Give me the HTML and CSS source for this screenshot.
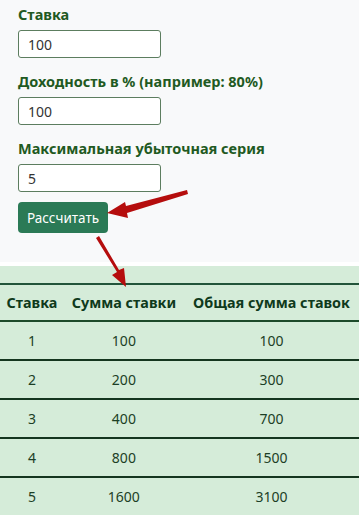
FILE: index.html
```html
<!DOCTYPE html>
<html lang="ru">
<head>
  <meta charset="UTF-8">
  <meta name="viewport" content="width=device-width, initial-scale=1.0">
  <title>Калькулятор ставок</title>
  <link rel="stylesheet" href="styles.css">
</head>
<body>
  <!-- Form -->
  <div class="calc-form">
    <label class="field-label" for="stake">Ставка</label>
    <input class="field-input" id="stake" type="text" value="100">

    <label class="field-label" for="profit">Доходность в % (например: 80%)</label>
    <input class="field-input" id="profit" type="text" value="100">

    <label class="field-label" for="series">Максимальная убыточная серия</label>
    <input class="field-input" id="series" type="text" value="5">

    <button class="calc-button">Рассчитать</button>
  </div>

  <!-- Results -->
  <div class="results">
    <table class="results-table">
      <thead>
        <tr>
          <th>Ставка</th>
          <th>Сумма ставки</th>
          <th>Общая сумма ставок</th>
        </tr>
      </thead>
      <tbody>
        <tr><td>1</td><td>100</td><td>100</td></tr>
        <tr><td>2</td><td>200</td><td>300</td></tr>
        <tr><td>3</td><td>400</td><td>700</td></tr>
        <tr><td>4</td><td>800</td><td>1500</td></tr>
        <tr><td>5</td><td>1600</td><td>3100</td></tr>
      </tbody>
    </table>
  </div>

  <!-- Annotation arrows -->
  <svg class="arrows" width="359" height="515" viewBox="0 0 359 515" xmlns="http://www.w3.org/2000/svg">
    <path d="M187 190 L126 206 L125 202 L107 213 L128 218 L127 213 L188 194 Z" fill="#b50d0d"/>
    <path d="M96 238 L117 272 L112 275 L126 287 L124 268 L119 270 L99 236 Z" fill="#b50d0d"/>
  </svg>
</body>
</html>
```

FILE: styles.css
```css
body {
  margin: 0;
  width: 359px;
  height: 515px;
  overflow: hidden;
  position: relative;
  font-family: "Noto Sans", "Open Sans", sans-serif;
  background-color: #fff;
  color: #1a4d26;
}

/* Form styles */
.calc-form {
  display: flex;
  flex-direction: column;
  align-items: flex-start;
  padding: 4px 18px 29px;
  background-color: #f8f9fa;
}

.field-label {
  font-size: 14.5px;
  font-weight: 700;
  color: #1f5a22;
  line-height: 20px;
  margin: 0 0 6px;
}

.field-input {
  box-sizing: border-box;
  width: 143px;
  height: 28px;
  padding: 2px 9px;
  margin: 0 0 13px;
  font-family: inherit;
  font-size: 14px;
  color: #333;
  background-color: #fff;
  border: 1px solid #5c7d5f;
  border-radius: 3px;
}

.calc-button {
  margin-top: -3px;
  height: 31px;
  padding: 0 9px;
  font-family: inherit;
  font-size: 13.5px;
  color: #fff;
  background-color: #2b7a56;
  border: none;
  border-radius: 4px;
  cursor: pointer;
}

/* Results table */
.results {
  margin-top: 4px;
  padding-top: 17px;
  background-color: #d5ecd9;
}

.results-table {
  width: 100%;
  border-collapse: collapse;
  border-top: 2px solid #22543a;
  font-size: 14px;
}

.results-table th {
  height: 35px;
  padding: 0 5px;
  font-size: 14.4px;
  font-weight: 700;
  color: #0f3a1c;
  white-space: nowrap;
  border-bottom: 2px solid #1d4a2a;
}

.results-table td {
  height: 37px;
  padding: 0 5px;
  text-align: center;
  color: #1c3f26;
  border-bottom: 2px solid #15361f;
}

.arrows {
  position: absolute;
  top: 0;
  left: 0;
  pointer-events: none;
}
```
